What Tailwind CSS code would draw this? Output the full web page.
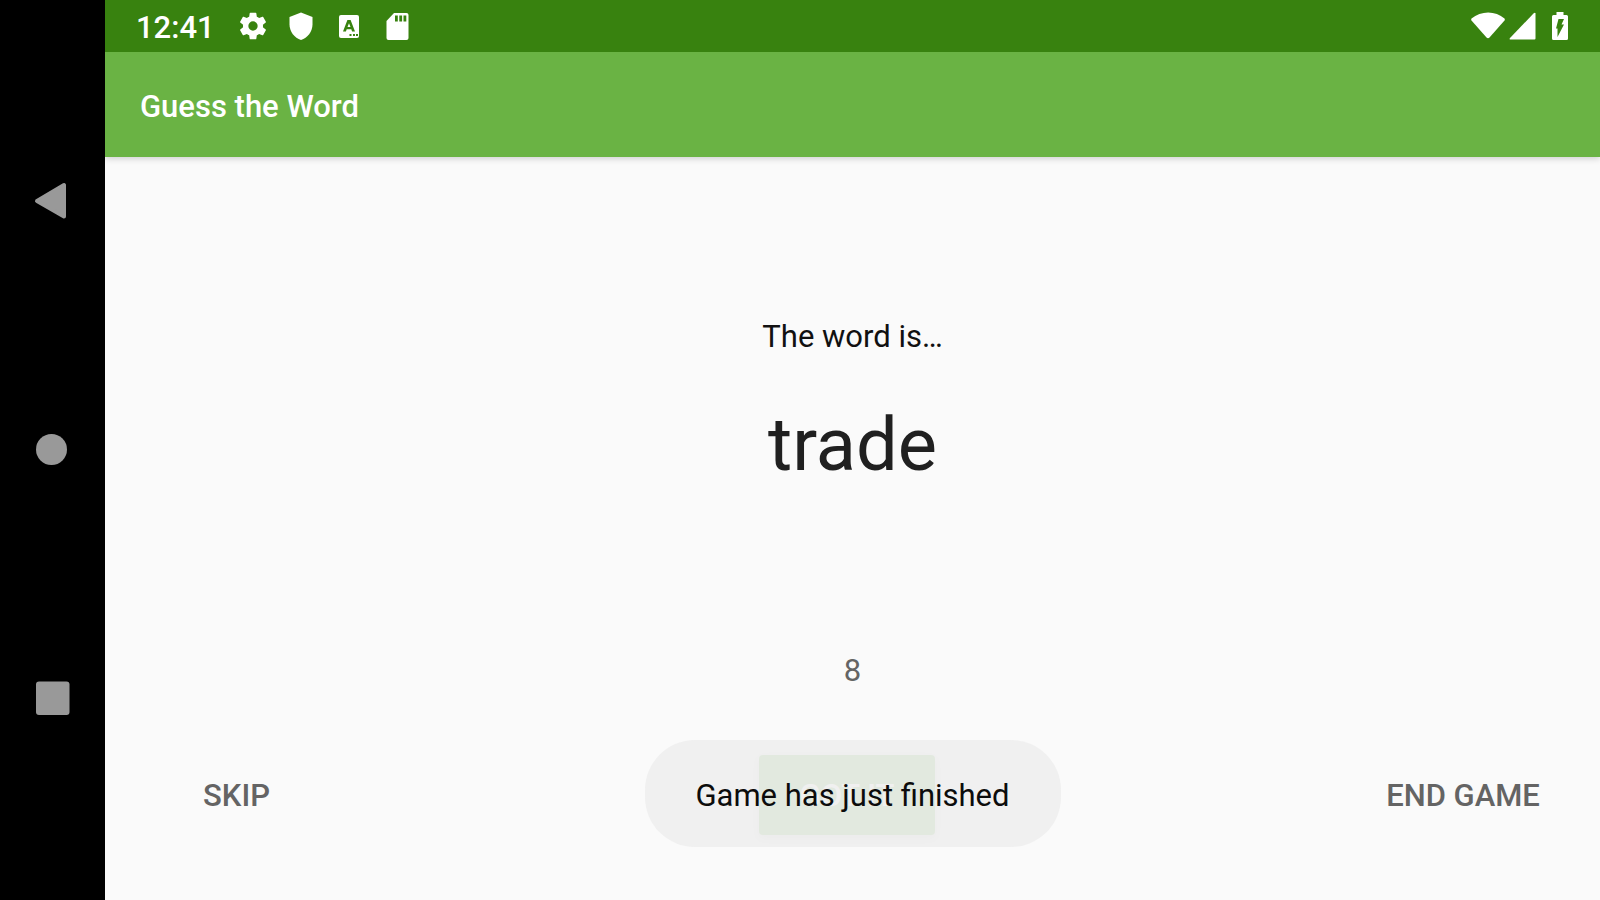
<!DOCTYPE html>
<html lang="en">
<head>
<meta charset="utf-8">
<meta name="viewport" content="width=device-width, initial-scale=1">
<title>Guess the Word</title>
<script src="https://cdn.jsdelivr.net/npm/@tailwindcss/browser@4"></script>
</head>
<body class="flex h-screen bg-[#fafafa] font-['Roboto',sans-serif] text-[31px] leading-9">
  <nav aria-label="System navigation" class="flex w-[105px] shrink-0 flex-col items-center justify-center gap-[208px] bg-black pr-0.5 text-[#999]">
    <button type="button" aria-label="Back"><svg class="size-10" viewBox="0 0 40 40" fill="currentColor" stroke="currentColor" stroke-width="4" stroke-linejoin="round"><path d="M5 19 32 3v31.500z"/></svg></button>
    <button type="button" aria-label="Home"><svg class="size-10" viewBox="0 0 40 40" fill="currentColor"><circle cx="19.500" cy="19.500" r="15.500"/></svg></button>
    <button type="button" aria-label="Recent apps"><svg class="size-10" viewBox="0 0 40 40" fill="currentColor"><rect x="4" y="3.500" width="33.500" height="33.500" rx="3"/></svg></button>
  </nav>
  <div class="flex min-w-0 flex-1 flex-col">
    <div class="z-20 flex h-[52px] shrink-0 items-center justify-between bg-[#38820f] pl-[31px] pr-[22px] text-white">
      <div class="flex items-center gap-4">
        <time class="mr-1.5 pt-1 font-medium">12:41</time>
        <svg class="size-8" viewBox="0 0 24 24" fill="currentColor"><path d="M19.430 12.980c.04-.32.07-.64.07-.98s-.03-.66-.07-.98l2.110-1.650c.19-.15.24-.42.12-.64l-2-3.460c-.12-.22-.39-.3-.61-.22l-2.490 1c-.52-.4-1.080-.73-1.690-.98l-.38-2.650C14.460 2.180 14.250 2 14 2h-4c-.25 0-.46.18-.49.42l-.38 2.650c-.61.25-1.170.59-1.690.98l-2.490-1c-.23-.09-.49 0-.61.22l-2 3.460c-.13.22-.07.49.12.64l2.110 1.650c-.04.32-.07.65-.07.98s.03.66.07.98l-2.110 1.650c-.19.15-.24.42-.12.64l2 3.460c.12.22.39.3.61.22l2.490-1c.52.4 1.080.73 1.690.98l.38 2.650c.03.24.24.42.49.42h4c.25 0 .46-.18.49-.42l.38-2.650c.61-.25 1.170-.59 1.690-.98l2.490 1c.23.09.49 0 .61-.22l2-3.460c.12-.22.07-.49-.12-.64zM12 15.500A3.500 3.500 0 1 1 12 8.500a3.500 3.500 0 0 1 0 7z"/></svg>
        <svg class="size-8" viewBox="0 0 32 32" fill="currentColor"><path d="M16 2.500 27.500 7V14.500c0 7-5 13.500-11.500 15.500C9.500 28 4.500 21.500 4.500 14.500V7z"/></svg>
        <svg class="size-8" viewBox="0 0 32 32"><rect x="6" y="5" width="20" height="23" rx="2" fill="#fff"/><path d="M14.400 10h3.200L22 21.500h-2.900l-.8-2.300h-4.600l-.8 2.300H10zm1.600 3.300-1.500 3.800h3z" fill="#38820f"/><path d="M16.500 24h2v2h-2zM20 24h2v2h-2zM23 24h2v2h-2z" fill="#38820f"/></svg>
        <svg class="size-8" viewBox="0 0 32 32"><path d="M13 3h12.500q2 0 2 2v23q0 2-2 2h-18q-2 0-2-2V11z" fill="#fff"/><path d="M14 5.500h2.800v6H14zM18.300 5.500h2.800v6h-2.800zM22.500 5.500h2.800v6h-2.800z" fill="#38820f"/></svg>
      </div>
      <div class="flex items-center">
        <svg class="h-8 w-9" viewBox="0 0 36 32" fill="currentColor"><path d="M1.500 8.500C11 .5 25.500.5 34.500 8.500q.8 1 0 2L19.500 27.500q-1.500 1.500-3 0L1.500 10.500q-.8-1 0-2z"/></svg>
        <svg class="h-8 w-9" viewBox="0 0 36 32" fill="currentColor"><path d="M29.500 3.500v25q0 1-1 1H4.500q-1.500 0-.5-1.500L27.500 3.500q1.500-1.500 2 0z"/></svg>
        <svg class="h-8 w-9" viewBox="0 0 36 32"><path d="M14.500 2h7V5h3q1.500 0 1.500 1.500v22q0 1.500-1.500 1.500h-13q-1.500 0-1.500-1.500V6.500Q10 5 11.500 5h3z" fill="#fff"/><path d="M16.500 9h5.500l-2.500 5.500H22L15.500 27v-8.500H14z" fill="#38820f"/></svg>
      </div>
    </div>
    <header class="z-10 flex h-[105px] shrink-0 items-center bg-[#6ab344] px-[35px] pt-1 text-white shadow-[0_2px_6px_rgba(0,0,0,0.16)]">
      <h1 class="font-medium">Guess the Word</h1>
    </header>
    <main class="relative flex flex-1 flex-col items-center justify-end pb-[53px] text-center">
      <p class="mb-[42px] text-[#111]">The word is…</p>
      <h2 class="mb-40 text-[74px] leading-[96px] text-[#202020]">trade</h2>
      <p class="mb-[53px] text-[#646464]">8</p>
      <div class="flex w-full items-center justify-between px-[35px] font-medium text-[#646464]">
        <button type="button" class="h-[105px] w-[193px] pt-0.5">SKIP</button>
        <button type="button" class="h-20 w-44 rounded bg-[#6ab344] pt-0.5 text-white shadow-[0_3px_8px_rgba(0,0,0,0.2)]">GOT IT</button>
        <button type="button" class="h-[105px] w-[204px] pt-0.5">END GAME</button>
      </div>
      <div role="status" class="absolute bottom-[53px] left-1/2 flex h-[107px] w-[416px] -translate-x-1/2 items-center justify-center rounded-[50px] bg-[#eee]/91 pt-1 text-[#0c0c0c]">Game has just finished</div>
    </main>
  </div>
</body>
</html>
